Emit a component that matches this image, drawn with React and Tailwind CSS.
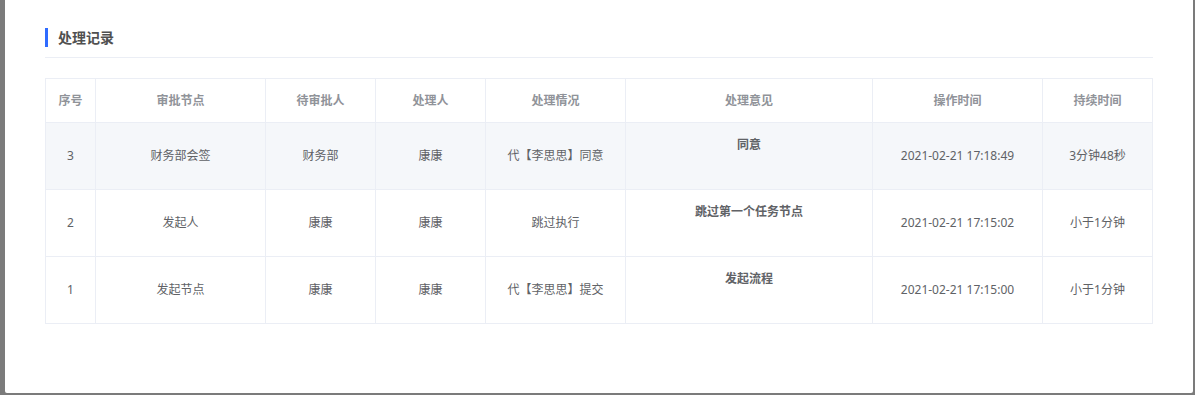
import React from "react";

const rows = [
  { no: "3", node: "财务部会签", pending: "财务部", handler: "康康", status: "代【李思思】同意", opinion: "同意", time: "2021-02-21 17:18:49", dur: "3分钟48秒", hl: true },
  { no: "2", node: "发起人", pending: "康康", handler: "康康", status: "跳过执行", opinion: "跳过第一个任务节点", time: "2021-02-21 17:15:02", dur: "小于1分钟" },
  { no: "1", node: "发起节点", pending: "康康", handler: "康康", status: "代【李思思】提交", opinion: "发起流程", time: "2021-02-21 17:15:00", dur: "小于1分钟" },
];

const headers = ["序号", "审批节点", "待审批人", "处理人", "处理情况", "处理意见", "操作时间", "持续时间"];
const widths = [50, 170, 110, 110, 140, 247, 170, 110];

export default function App() {
  return (
    <div
      className="w-[1195px] h-[395px] bg-[#7b7b7b] pl-[5px] pr-[2px] pb-[2px] overflow-hidden"
      style={{ fontFamily: '"Noto Sans", "Noto Sans CJK SC", sans-serif' }}
    >
      <div className="h-full bg-white rounded-b-[2px] px-10 pt-[28px]">
        <div className="flex items-center h-[19px]">
          <div className="w-[3px] h-[19px] bg-[#2f6bff]" />
          <div className="ml-[10px] text-[14px] font-bold text-[#505050] leading-[19px]">处理记录</div>
        </div>
        <div className="mt-[10px] h-px w-[1108px] bg-[#ebeef5]" />
        <table className="mt-[20px] w-[1107px] table-fixed border-collapse border border-[#ebeef5] text-[12px]">
          <colgroup>
            {widths.map((w, i) => (
              <col key={i} style={{ width: w }} />
            ))}
          </colgroup>
          <thead>
            <tr className="h-[44px]">
              {headers.map((h) => (
                <th key={h} className="border border-[#ebeef5] text-center font-bold text-[#909399] p-0">
                  {h}
                </th>
              ))}
            </tr>
          </thead>
          <tbody>
            {rows.map((r) => (
              <tr key={r.no} className={`h-[67px] ${r.hl ? "bg-[#f5f7fa]" : "bg-white"} text-[#606266]`}>
                <td className="border border-[#ebeef5] text-center p-0">{r.no}</td>
                <td className="border border-[#ebeef5] text-center p-0">{r.node}</td>
                <td className="border border-[#ebeef5] text-center p-0">{r.pending}</td>
                <td className="border border-[#ebeef5] text-center p-0">{r.handler}</td>
                <td className="border border-[#ebeef5] text-center p-0">{r.status}</td>
                <td className="border border-[#ebeef5] text-center align-top p-0 pt-[14px] font-bold leading-[16px]">{r.opinion}</td>
                <td className="border border-[#ebeef5] text-center p-0">{r.time}</td>
                <td className="border border-[#ebeef5] text-center p-0">{r.dur}</td>
              </tr>
            ))}
          </tbody>
        </table>
      </div>
    </div>
  );
}
